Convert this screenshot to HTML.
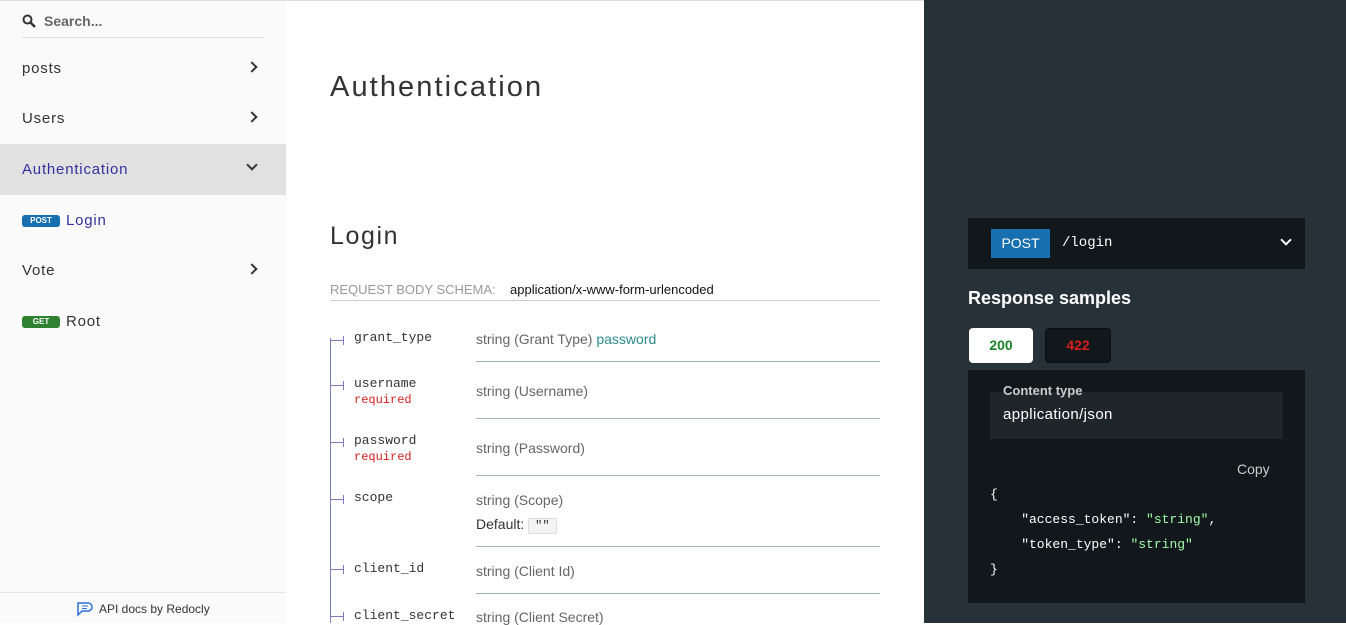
<!DOCTYPE html>
<html><head><meta charset="utf-8"><style>
*{margin:0;padding:0;box-sizing:border-box}
body{width:1346px;height:623px;overflow:hidden;position:relative;font-family:"Liberation Sans",sans-serif;background:#fff}
.a{position:absolute;white-space:nowrap}
#side{position:absolute;left:0;top:0;width:286px;height:623px;background:#fafafa;border-top:1px solid #ddd}
.nav{position:absolute;left:0;width:286px;height:51px;font-size:15px;color:#333;padding-left:22px;line-height:51px;letter-spacing:0.8px}
.chev{position:absolute;right:30px;top:20px;width:8px;height:8px;border-right:2px solid #333;border-bottom:2px solid #333;transform:rotate(-45deg)}
.badge{display:inline-block;width:38px;height:12px;border-radius:3px;color:#fff;font-size:8px;font-weight:bold;text-align:center;line-height:12px;vertical-align:middle;margin-right:6px;letter-spacing:0}
.mono{font-family:"Liberation Mono",monospace}
.fn{font-family:"Liberation Mono",monospace;font-size:13px;color:#333;position:absolute;left:354px}
.req{font-family:"Liberation Mono",monospace;font-size:12px;color:#d41f1c;position:absolute;left:354px}
.ty{position:absolute;left:476px;font-size:14px;color:#666}
.hr{position:absolute;left:476px;width:404px;height:1px;background:#9fb4be}
.tk{position:absolute;left:330px;width:14px;height:1px;background:#7c7cbb}
.tk:after{content:"";position:absolute;right:0;top:-4px;width:1px;height:9px;background:#7c7cbb}
</style></head><body>
<div id="side">
 <svg class="a" style="left:22px;top:13px" width="14" height="14" viewBox="0 0 14 14"><circle cx="5.5" cy="5.5" r="4" fill="none" stroke="#333" stroke-width="2"/><line x1="8.5" y1="8.5" x2="13" y2="13" stroke="#333" stroke-width="2.5"/></svg>
 <div class="a" style="left:44px;top:12px;font-size:14px;font-weight:bold;color:#666">Search...</div>
 <div class="a" style="left:22px;top:36px;width:242px;height:1px;background:#ddd"></div>
 <div class="nav" style="top:42px">posts<span class="chev"></span></div>
 <div class="nav" style="top:92px">Users<span class="chev"></span></div>
 <div class="nav" style="top:143px;background:#e1e1e1;color:#32329f">Authentication<span class="chev" style="transform:rotate(45deg);top:17px;border-color:#333"></span></div>
 <div class="nav" style="top:194px;color:#32329f"><span class="badge" style="background:#186faf">POST</span>Login</div>
 <div class="nav" style="top:244px">Vote<span class="chev"></span></div>
 <div class="nav" style="top:295px"><span class="badge" style="background:#2f8132">GET</span>Root</div>
 <div class="a" style="left:0;top:591px;width:286px;height:1px;background:#e6e6e6"></div>
 <svg class="a" style="left:76px;top:600px" width="18" height="16" viewBox="0 0 18 16"><path d="M2 2h10a4 4 0 010 8H6l-4 4z" fill="none" stroke="#2a6fdb" stroke-width="1.5"/><path d="M6 5h6M6 7.5h5" stroke="#2a6fdb"/></svg>
 <div class="a" style="left:99px;top:601px;font-size:12px;color:#333">API docs by Redocly</div>
</div>
<div class="a" style="left:286px;top:0;width:638px;height:1px;background:#ddd"></div>
<div class="a" style="left:330px;top:71px;font-size:29px;color:#333;letter-spacing:2.1px">Authentication</div>
<div class="a" style="left:330px;top:222px;font-size:25px;color:#333;letter-spacing:1.6px">Login</div>
<div class="a" style="left:330px;top:282px;font-size:13px;color:#999">REQUEST BODY SCHEMA:</div>
<div class="a" style="left:510px;top:282px;font-size:13px;color:#111">application/x-www-form-urlencoded</div>
<div class="a" style="left:330px;top:300px;width:550px;height:1px;background:#ccc"></div>
<div class="a" style="left:330px;top:338px;width:1px;height:285px;background:#7c7cbb"></div>
<div class="tk" style="top:340px"></div><div class="fn" style="top:330px">grant_type</div>
<div class="ty" style="top:331px">string (Grant Type) <span style="color:#2b8a8e">password</span></div>
<div class="hr" style="top:361px"></div>
<div class="tk" style="top:385px"></div><div class="fn" style="top:376px">username</div><div class="req" style="top:393px">required</div>
<div class="ty" style="top:383px">string (Username)</div>
<div class="hr" style="top:418px"></div>
<div class="tk" style="top:442px"></div><div class="fn" style="top:433px">password</div><div class="req" style="top:450px">required</div>
<div class="ty" style="top:440px">string (Password)</div>
<div class="hr" style="top:475px"></div>
<div class="tk" style="top:499px"></div><div class="fn" style="top:490px">scope</div>
<div class="ty" style="top:492px">string (Scope)</div>
<div class="a" style="left:476px;top:516px;font-size:14px;color:#333">Default: <span style="display:inline-block;background:#f3f3f3;border:1px solid #ddd;border-radius:2px;padding:0 6px;font-size:12px;font-family:'Liberation Mono',monospace">""</span></div>
<div class="hr" style="top:546px"></div>
<div class="tk" style="top:569px"></div><div class="fn" style="top:561px">client_id</div>
<div class="ty" style="top:563px">string (Client Id)</div>
<div class="hr" style="top:593px"></div>
<div class="tk" style="top:616px"></div><div class="fn" style="top:608px">client_secret</div>
<div class="ty" style="top:609px">string (Client Secret)</div>

<div class="a" style="left:924px;top:0;width:422px;height:623px;background:#263238"></div>
<div class="a" style="left:968px;top:218px;width:337px;height:51px;background:#11171a"></div>
<div class="a" style="left:991px;top:229px;width:59px;height:29px;background:#186faf;color:#fff;font-size:14px;text-align:center;line-height:29px">POST</div>
<div class="a mono" style="left:1062px;top:235px;font-size:14px;color:#fff">/login</div>
<div class="a" style="left:1282px;top:236px;width:8px;height:8px;border-right:2px solid #fff;border-bottom:2px solid #fff;transform:rotate(45deg)"></div>
<div class="a" style="left:968px;top:288px;font-size:18px;font-weight:bold;color:#fff">Response samples</div>
<div class="a" style="left:969px;top:328px;width:64px;height:35px;background:#fff;border-radius:4px;color:#1d8127;font-size:14px;font-weight:bold;text-align:center;line-height:35px">200</div>
<div class="a" style="left:1045px;top:328px;width:66px;height:35px;background:#11171a;border:1px solid #0a0d0e;border-radius:4px;color:#d41f1c;font-size:14px;font-weight:bold;text-align:center;line-height:33px">422</div>
<div class="a" style="left:968px;top:370px;width:337px;height:233px;background:#11171a"></div>
<div class="a" style="left:990px;top:392px;width:293px;height:47px;background:#1f262a"></div>
<div class="a" style="left:1003px;top:383px;font-size:13px;font-weight:bold;color:#ccc">Content type</div>
<div class="a" style="left:1003px;top:406px;font-size:15px;color:#fff;letter-spacing:0.4px">application/json</div>
<div class="a" style="left:1237px;top:461px;font-size:14px;color:#ccc">Copy</div>
<div class="a mono" style="left:990px;top:482px;font-size:13px;color:#fff;line-height:25px">{<br>&nbsp;&nbsp;&nbsp;&nbsp;"access_token": <span style="color:#a0fbaa">"string"</span>,<br>&nbsp;&nbsp;&nbsp;&nbsp;"token_type": <span style="color:#a0fbaa">"string"</span><br>}</div>
</body></html>
